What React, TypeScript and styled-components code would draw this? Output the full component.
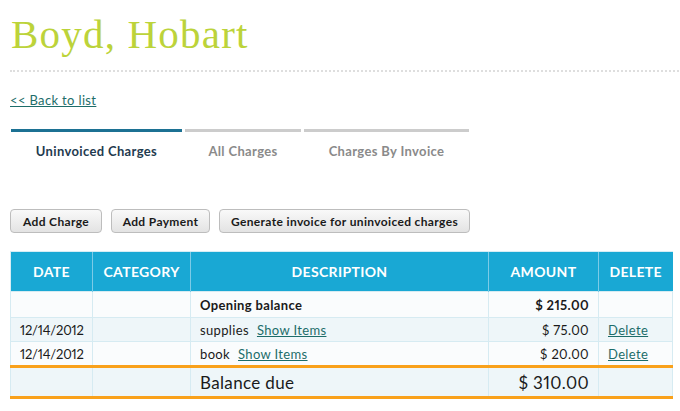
import React from "react";
import styled, { createGlobalStyle } from "styled-components";

const Global = createGlobalStyle`
  html, body { margin: 0; padding: 0; background: #fff; }
  body { font-family: "Lato", "Noto Sans", sans-serif; color: #1a1a1a; letter-spacing: 0.35px; }
`;

const Page = styled.div`
  padding: 0 8px 0 10px;
  width: 662px;
`;

const Title = styled.h1`
  margin: 0;
  padding: 9px 0 0 1px;
  font-family: "Liberation Serif", "DejaVu Serif", serif;
  font-weight: normal;
  font-size: 41px;
  letter-spacing: 1.2px;
  line-height: 50px;
  color: #bcd33a;
`;

const Divider = styled.div`
  margin-top: 11px;
  margin-right: -10px;
  border-top: 2px dotted #dedede;
`;

const BackLink = styled.a`
  display: inline-block;
  margin-top: 20px;
  font-size: 13px;
  color: #1d6d6a;
  text-decoration: underline;
  line-height: 16px;
`;

const Tabs = styled.div`
  display: flex;
  gap: 3px;
  margin-top: 21px;
  margin-left: 1px;
`;

const Tab = styled.div<{ $active?: boolean; $w: number }>`
  width: ${(p) => p.$w}px;
  border-top: 3px solid ${(p) => (p.$active ? "#1c7193" : "#cccccc")};
  padding-top: 9px;
  text-align: center;
  font-size: 13px;
  font-weight: 700;
  line-height: 20px;
  color: ${(p) => (p.$active ? "#1f3b4f" : "#8a8a8a")};
`;

const Toolbar = styled.div`
  display: flex;
  gap: 9px;
  margin-top: 48px;
`;

const Button = styled.button<{ $w: number }>`
  width: ${(p) => p.$w}px;
  height: 24px;
  padding: 0;
  border: 1px solid #bdbdbd;
  border-radius: 4px;
  background: linear-gradient(#f9f9f9, #e3e3e3);
  font-family: "Lato", "Noto Sans", sans-serif;
  font-size: 12px;
  font-weight: 700;
  letter-spacing: 0.35px;
  color: #1a1a1a;
`;

const Table = styled.table`
  margin-top: 18px;
  width: 662px;
  border-collapse: collapse;
  table-layout: fixed;
  font-size: 13px;
  font-variant-numeric: proportional-nums;
`;

const Th = styled.th`
  box-sizing: border-box;
  height: 40px;
  padding: 0;
  background: #19a8d4;
  color: #fff;
  font-size: 14px;
  font-weight: 700;
  text-align: center;
  border-left: 1px solid #7ccbe7;
  border-top: 1px solid #d6edf5;
  &:first-child { border-left: 1px solid #d6edf5; }
`;

const Row = styled.tr<{ $alt?: boolean; $h: number }>`
  height: ${(p) => p.$h}px;
  background: ${(p) => (p.$alt ? "#eef6f9" : "#fafcfd")};
`;

const Td = styled.td<{ $align?: string; $bold?: boolean }>`
  padding: 0 9px;
  text-align: ${(p) => p.$align || "left"};
  font-weight: ${(p) => (p.$bold ? 700 : 400)};
  border: 1px solid #d6ebf2;
  white-space: nowrap;
  overflow: visible;
`;

const DateCell = styled(Td)`
  letter-spacing: -0.2px;
`;

const TotalRow = styled.tr`
  height: 31px;
  background: #eef6f9;
  border-top: 3px solid #f9a11b;
  border-bottom: 3px solid #f9a11b;
`;

const TotalCell = styled.td<{ $align?: string; $size: number }>`
  padding: 0 9px;
  text-align: ${(p) => p.$align || "left"};
  font-size: ${(p) => p.$size}px;
  border-left: 1px solid #d6ebf2;
  border-right: 1px solid #d6ebf2;
`;

const Link = styled.a`
  color: #1d6d6a;
  text-decoration: underline;
`;

const ItemsLink = styled(Link)`
  margin-left: 8px;
`;

const widths = [82, 98, 298, 110, 74];

export default function App() {
  return (
    <>
      <Global />
      <Page>
        <Title>Boyd, Hobart</Title>
        <Divider />
        <BackLink href="#">&lt;&lt; Back to list</BackLink>
        <Tabs>
          <Tab $active $w={171}>Uninvoiced Charges</Tab>
          <Tab $w={116}>All Charges</Tab>
          <Tab $w={165}>Charges By Invoice</Tab>
        </Tabs>
        <Toolbar>
          <Button $w={92}>Add Charge</Button>
          <Button $w={99}>Add Payment</Button>
          <Button $w={251}>Generate invoice for uninvoiced charges</Button>
        </Toolbar>
        <Table>
          <colgroup>
            {widths.map((w, i) => (
              <col key={i} style={{ width: w }} />
            ))}
          </colgroup>
          <thead>
            <tr>
              <Th>DATE</Th>
              <Th>CATEGORY</Th>
              <Th>DESCRIPTION</Th>
              <Th>AMOUNT</Th>
              <Th>DELETE</Th>
            </tr>
          </thead>
          <tbody>
            <Row $h={26}>
              <Td />
              <Td />
              <Td $bold>Opening balance</Td>
              <Td $align="right" $bold>$ 215.00</Td>
              <Td />
            </Row>
            <Row $alt $h={24}>
              <DateCell>12/14/2012</DateCell>
              <Td />
              <Td>
                supplies<ItemsLink href="#">Show Items</ItemsLink>
              </Td>
              <Td $align="right">$ 75.00</Td>
              <Td>
                <Link href="#">Delete</Link>
              </Td>
            </Row>
            <Row $h={25}>
              <DateCell>12/14/2012</DateCell>
              <Td />
              <Td>
                book<ItemsLink href="#">Show Items</ItemsLink>
              </Td>
              <Td $align="right">$ 20.00</Td>
              <Td>
                <Link href="#">Delete</Link>
              </Td>
            </Row>
            <TotalRow>
              <TotalCell $size={13} />
              <TotalCell $size={13} />
              <TotalCell $size={17}>Balance due</TotalCell>
              <TotalCell $align="right" $size={17}>$ 310.00</TotalCell>
              <TotalCell $size={13} />
            </TotalRow>
          </tbody>
        </Table>
      </Page>
    </>
  );
}
